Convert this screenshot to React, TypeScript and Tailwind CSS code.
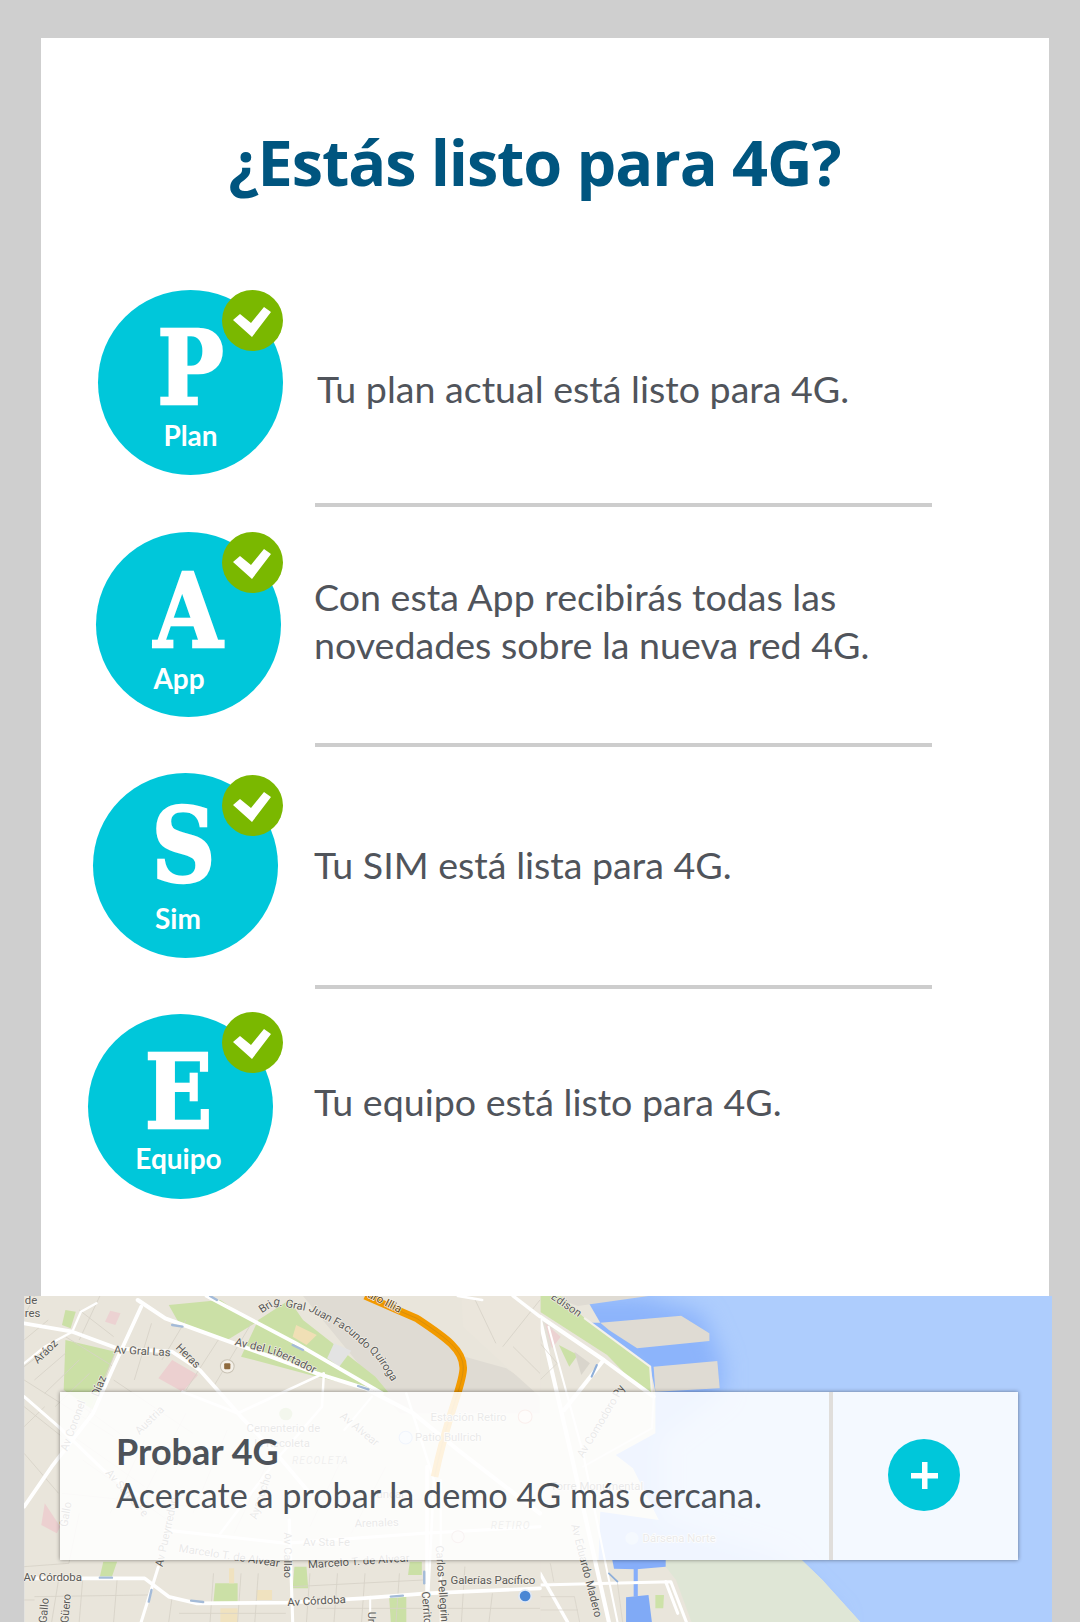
import React from "react";

const sans = "font-['Open_Sans','Noto_Sans',sans-serif]";
const body = "font-['Lato','Open_Sans',sans-serif]";

function Check() {
  return (
    <svg viewBox="0 0 61 61" className="absolute top-0 left-0 h-[61px] w-[61px]">
      <circle cx="30.5" cy="30.5" r="30.5" fill="#7ab800" />
      <polygon points="11,30 18,24 29,33 42,17 49,22 30,47" fill="#ffffff" />
    </svg>
  );
}

function Badge({ letter, label, left, top, letterClass, labelClass }: { letter: string; label: string; left: string; top: string; letterClass: string; labelClass: string }) {
  return (
    <div className="relative h-[185px] w-[185px] rounded-full bg-[#00c7da] text-white">
      <div className={`absolute inset-x-0 scale-x-[0.86] text-center font-['DejaVu_Serif',serif] text-[103px] leading-[104px] font-bold [-webkit-text-stroke:2.5px_#ffffff] ${letterClass}`}>{letter}</div>
      <div className={`absolute inset-x-0 text-center ${body} text-[28px] leading-[30px] font-bold ${labelClass}`}>{label}</div>
      <div className={`absolute h-[61px] w-[61px] ${left} ${top}`}>
        <Check />
      </div>
    </div>
  );
}

const Rule = () => <div className="ml-[274px] h-[4px] w-[617px] bg-[#cdcdcd]" />;

const Copy = ({ children, className }: { children: React.ReactNode; className: string }) => (
  <p className={`${body} text-[37.6px] leading-[48px] text-[#50545b] ${className}`}>{children}</p>
);

type L = [string, number, number, number?];

const leftLabels: L[] = [
  ["de", 72, 72, 0],
  ["res", 72, 110, 0],
  ["Aráoz", 110, 252, -45],
  ["Av Gral Las", 330, 220, 3],
  ["Heras", 508, 205, 45],
  ["Díaz", 285, 352, -68],
  ["Av Coronel", 195, 515, -70],
  ["Austria", 405, 465, -45],
  ["Cementerio de", 716, 455, 0],
  ["la Recoleta", 738, 500, 0],
  ["Av Alvear", 985, 412, 40],
  ["Estación Retiro", 1250, 422, 0],
  ["Patio Bullrich", 1205, 482, 0],
  ["Av Sta Fe", 880, 797, 0],
  ["Arenales", 1030, 742, -2],
  ["Marcelo T. de Alvear", 518, 815, 9],
  ["Marcelo T. de Alvear", 895, 865, -4],
  ["Av Córdoba", 68, 902, 0],
  ["Av Córdoba", 835, 978, -3],
  ["Av Callao", 825, 757, 90],
  ["Av Pueyrredón", 472, 862, -78],
  ["Ayacucho", 745, 720, -72],
  ["Gallo", 195, 742, -80],
  ["Gallo", 135, 1030, -85],
  ["Güero", 198, 1030, -85],
  ["Galerías Pacífico", 1308, 912, 0],
  ["Carlos Pellegrini", 1265, 797, 86],
  ["Cerrito", 1225, 935, 86],
  ["Uruguay", 1070, 995, 90],
  ["Av Santa Fe", 305, 580, 50],
  ["Juncal", 1075, 655, 0],
];

const rightLabels: L[] = [
  ["Edison", 30, 55, 35],
  ["Av Comodoro Py", 125, 535, -60],
  ["Torre Monumental", 30, 630, 0],
  ["Dársena Norte", 298, 787, 0],
  ["Av Eduardo Madero", 90, 735, 76],
];

function Labels({ items }: { items: L[] }) {
  return (
    <g fill="#5a5a58" fontSize="33" stroke="#f3efe7" strokeWidth="4" paintOrder="stroke" strokeLinejoin="round">
      {items.map(([t, x, y, r], i) => (
        <text key={i} x={x} y={y} transform={r ? `rotate(${r} ${x} ${y})` : undefined}>
          {t}
        </text>
      ))}
    </g>
  );
}

const thinLeft = [
  "M70 260L210 150", "M70 300L330 470", "M70 380L180 470", "M70 520L170 640", "M190 170L330 260", "M340 205L250 420", "M230 90L330 170",
  "M100 48L70 110", "M290 48L230 180", "M440 130L390 300", "M330 300L560 460", "M540 120L470 240", "M640 170L540 330", "M730 130L620 320",
  "M170 900L150 1026", "M240 900L230 1026", "M340 900L330 1026", "M500 950L490 1026", "M620 880L610 1026", "M700 880L690 1026", "M750 880L740 1026",
  "M100 950L430 945", "M520 1000L830 1000", "M900 880L890 1026", "M980 880L970 1026", "M1060 880L1050 1026", "M1160 880L1150 1026", "M850 920L1230 900",
  "M240 380L480 560", "M200 460L420 620", "M420 480L320 700", "M540 400L420 640", "M660 450L560 700", "M780 540L680 760", "M1000 520L900 740", "M1120 560L1020 760",
  "M180 640L560 680", "M1380 60L1440 190", "M1460 200L1568 60", "M1490 200L1568 280", "M1000 650L1230 660", "M240 540L500 730",
  "M70 180L140 120", "M70 440L130 380", "M100 300L190 220", "M130 340L230 240", "M160 380L260 280", "M70 860L200 850", "M200 850L230 700",
  "M1350 860L1340 1026", "M1430 940L1420 1026", "M1300 985H1568", "M70 960H100", "M920 985H1230",
];

function MapArt() {
  return (
    <svg viewBox="24 1296 1028 326" className="block h-[326px] w-[1028px] font-['Roboto',sans-serif]">
      <defs>
        <filter id="soft" x="-30%" y="-30%" width="160%" height="160%">
          <feGaussianBlur stdDeviation="32" />
        </filter>
      </defs>
      <rect x="24" y="1296" width="1028" height="326" fill="#aecdfd" />
      <g transform="translate(540 1280) scale(0.34435 0.33333)">
        <path d="M0 48H300L470 100L530 240L530 340L350 480L350 720L700 830L880 1026H0Z" fill="#8cb4fb" filter="url(#soft)" />
        <path d="M100 70L175 128L410 107L492 160L492 183L282 205L330 260L515 243L522 325L335 335L0 335V48Z" fill="#8db5fb" />
        <path d="M0 48H130L175 128H0Z" fill="#e9e5db" />
        <path d="M175 128L410 107L492 160L492 183L282 205L200 150Z" fill="#dfdbd3" />
        <path d="M330 260L515 243L522 325L335 335Z" fill="#dfdbd3" />
        <path d="M30 48H315L110 78Z" fill="#dfdbd3" />
        <path d="M0 48H60L130 115L320 260L335 335L335 460L220 525L270 565L345 720L175 695L170 840H760L820 900L930 1026H0Z" fill="#e9e5db" />
        <path d="M350 840H760L820 900L930 1026H440L395 900Z" fill="#dfe6d6" />
        <path d="M0 48H60L130 115L320 260L325 340L265 300L195 225L0 95Z" fill="#cde2a8" />
        <path d="M0 110L40 140L30 210L0 180Z" fill="#e3dfd6" />
        <path d="M15 130L60 170L35 205Z" fill="#ecd2d2" />
        <path d="M55 195L110 225L85 260Z" fill="#cbe0a6" />
        <path d="M100 215L145 250L120 285Z" fill="#d9d5cc" />
        <path d="M210 840H365V860L280 868L215 866Z" fill="#86aefa" />
        <path d="M272 860H284V950H272Z" fill="#86aefa" />
        <path d="M250 952L315 945L325 1026H250Z" fill="#80aaf6" />
        <path d="M335 945L360 945L358 985L335 985Z" fill="#cde2a8" />
        <g fill="none" stroke="#ffffff" strokeLinecap="round" strokeLinejoin="round">
          <path d="M0 110L185 240L330 350" strokeWidth="12" />
          <path d="M130 115L320 260L325 340" strokeWidth="6" stroke="#f4f1ea" />
          <path d="M330 350L325 445L125 560" strokeWidth="5" stroke="#f8f6f2" />
          <path d="M0 120L90 520L200 1026" strokeWidth="12" />
          <path d="M25 140L125 520L225 1026" strokeWidth="6" />
          <path d="M185 240L70 390" strokeWidth="12" />
          <path d="M0 915L380 905L425 1026" strokeWidth="9" />
          <path d="M365 905L400 1000" strokeWidth="9" />
          <path d="M80 1026L0 880" strokeWidth="10" />
        </g>
        <g fill="none" stroke="#d6d1c6" strokeWidth="2">
          <path d="M0 950H100L115 1026" />
          <path d="M0 990H110" />
          <path d="M30 850L40 905" />
          <path d="M0 190L50 250L0 300" />
          <path d="M225 910L240 1026" />
        </g>
        <path d="M165 255L150 290" stroke="#8eaed8" strokeWidth="6" strokeLinecap="round" />
        <path d="M200 880L225 905" stroke="#8eaed8" strokeWidth="5" strokeLinecap="round" />
        <circle cx="267" cy="775" r="19" fill="#b6cff5" />
        <Labels items={rightLabels} />
      </g>
      <g transform="translate(0 1280) scale(0.34435 0.33333)">
        <rect x="70" y="48" width="1500" height="978" fill="#e9e5db" />
        <path d="M880 48H1060L1210 120L1350 230L1470 265L1568 330V400H1160L1080 300Z" fill="#dfdbd3" />
        <path d="M1340 48H1568V350L1460 250L1345 140Z" fill="#ebe6dc" />
        <path d="M190 180L335 215L270 390L185 330Z" fill="#cbe0a6" />
        <path d="M490 75L640 60L740 130L660 180L520 130Z" fill="#cbe0a6" />
        <path d="M750 120L840 60L880 120L1090 290L1130 340L920 290L700 230Z" fill="#cbe0a6" />
        <path d="M860 135L920 165L890 195L850 170Z" fill="#f0dfb5" />
        <path d="M970 190L1020 212L985 260L950 235Z" fill="#e3e3e3" />
        <path d="M320 92L350 100L335 135L305 125Z" fill="#ecd2d2" />
        <path d="M500 240L575 285L530 335L460 295Z" fill="#ecd0d0" />
        <path d="M130 670L175 740L165 760L120 735Z" fill="#ecd0d0" />
        <path d="M190 90L220 95L205 145L180 135Z" fill="#cbe0a6" />
        <path d="M300 845H340L325 890H290Z" fill="#cbe0a6" />
        <path d="M855 860H890L895 925H850Z" fill="#cbe0a6" />
        <path d="M625 910H690V965H620Z" fill="#cbe0a6" />
        <path d="M745 930H790V960H745Z" fill="#f0e2bf" />
        <path d="M640 985H690V1026H640Z" fill="#f0e2bf" />
        <path d="M1130 950H1180V1026H1135Z" fill="#cbe0a6" />
        <path d="M1190 845H1225V885H1185Z" fill="#cbe0a6" />
        <path d="M665 865H680V910H665Z" fill="#f0e2bf" />
        <g fill="none" stroke="#d7d2c7" strokeWidth="2.5">
          {thinLeft.map((d, i) => (
            <path key={i} d={d} />
          ))}
        </g>
        <g fill="none" stroke="#ffffff" strokeLinecap="round" strokeLinejoin="round">
          <path d="M70 130L210 155L340 205L500 215L580 270L700 410L810 530L900 640" strokeWidth="11" />
          <path d="M400 60L480 115L680 190L920 280L1060 325L1200 400L1330 510L1568 700" strokeWidth="12" />
          <path d="M600 48L860 190L1110 340" strokeWidth="11" />
          <path d="M410 80L330 260L270 400L150 560L70 680" strokeWidth="11" />
          <path d="M70 350L170 440L300 570L420 660" strokeWidth="9" />
          <path d="M70 250L130 200L210 155L235 95L280 70" strokeWidth="7" />
          <path d="M530 335L690 400L940 280" strokeWidth="8" />
          <path d="M940 290L935 380L810 530L640 760" strokeWidth="7" />
          <path d="M70 895L420 895L490 950L570 970L835 968L1050 955L1240 940L1568 925" strokeWidth="11" />
          <path d="M460 860L410 1026" strokeWidth="9" />
          <path d="M1240 560L1240 1026" strokeWidth="10" />
          <path d="M1280 600L1280 1026" strokeWidth="6" />
          <path d="M480 750L830 790L1230 760L1568 740" strokeWidth="9" />
          <path d="M840 720L850 1026" strokeWidth="9" />
          <path d="M1075 950V1026" strokeWidth="6" />
          <path d="M1180 340L1260 600L1240 1026" strokeWidth="7" />
          <path d="M1490 48L1568 110" strokeWidth="10" />
          <path d="M1330 48L1400 60" strokeWidth="8" />
          <path d="M1000 450L1080 350" strokeWidth="6" />
        </g>
        <path d="M1060 48L1210 115C1290 170 1350 210 1345 270C1340 330 1300 400 1262 590" fill="none" stroke="#f29a00" strokeWidth="22" strokeLinejoin="round" />
        <path d="M1060 48L1210 115C1290 170 1350 210 1345 270C1340 330 1300 400 1262 590" fill="none" stroke="#c98a14" strokeWidth="2" />
        <g stroke="#a4bbd8" strokeWidth="7" strokeLinecap="round">
          <path d="M500 135L530 140" />
          <path d="M850 195L880 210" />
          <path d="M1040 318L1070 328" />
          <path d="M290 893H325" />
          <path d="M555 962L590 966" />
          <path d="M1135 950L1170 947" />
          <path d="M1232 875V910" />
          <path d="M440 930L432 965" />
          <path d="M610 48L630 60" />
        </g>
        <circle cx="660" cy="259" r="20" fill="#f4f0e8" stroke="#c9c3b5" strokeWidth="3" />
        <rect x="651" y="250" width="18" height="18" rx="3" fill="#8f6b3e" />
        <circle cx="830" cy="402" r="19" fill="#a6c57a" />
        <circle cx="1525" cy="410" r="20" fill="#f2e6dc" stroke="#d88a7a" strokeWidth="3" />
        <circle cx="1178" cy="473" r="19" fill="#dbe6f7" stroke="#8fb0e8" strokeWidth="3" />
        <circle cx="1330" cy="770" r="18" fill="#efe6e0" stroke="#c9a0a0" strokeWidth="3" />
        <circle cx="1525" cy="948" r="18" fill="#4a86d4" stroke="#dfe8f5" strokeWidth="5" />
        <path id="q1" d="M760 100L800 75L900 95L1000 150L1090 230L1160 340" fill="none" />
        <path id="q2" d="M680 195L800 225L925 287" fill="none" />
        <path id="q3" d="M1065 50L1210 125" fill="none" />
        <g fill="#5a5a58" fontSize="33" stroke="#f3efe7" strokeWidth="4" paintOrder="stroke" strokeLinejoin="round">
          <text><textPath href="#q1">Brig. Gral Juan Facundo Quiroga</textPath></text>
          <text><textPath href="#q2">Av del Libertador</textPath></text>
          <text fill="#6a4a10"><textPath href="#q3">uro Illia</textPath></text>
        </g>
        <g fill="#8b8b84" fontSize="30" fontStyle="italic" letterSpacing="3">
          <text x="848" y="552">RECOLETA</text>
          <text x="1425" y="746">RETIRO</text>
        </g>
        <Labels items={leftLabels} />
      </g>
    </svg>
  );
}

export default function App() {
  return (
    <div className="relative h-[1622px] w-[1080px] overflow-hidden bg-[#cfcfcf] pt-[38px]">
      <main className="ml-[41px] h-[1258px] w-[1008px] bg-white">
        <h1 className={`${sans} pt-[88px] pr-[21px] text-center text-[63px] leading-[72px] font-bold tracking-[-1.1px] text-[#00557f]`}>¿Estás listo para 4G?</h1>
        <div className="mt-[92px]">
          <div className="flex h-[213px] items-start">
            <div className="w-[276px] shrink-0 pl-[57px]">
              <Badge letter="P" label="Plan" left="left-[124px]" top="top-0" letterClass="top-[26px]" labelClass="top-[130px]" />
            </div>
            <Copy className="mt-[75px]">Tu plan actual está listo para 4G.</Copy>
          </div>
          <Rule />
          <div className="flex h-[236px] items-start pt-[25px]">
            <div className="w-[273px] shrink-0 pl-[55px]">
              <Badge letter="A" label="App" left="left-[126px]" top="top-0" letterClass="top-[27px] left-[-1px]" labelClass="top-[131px] left-[-19px]" />
            </div>
            <Copy className="mt-[41px]">Con esta App recibirás todas las<br />novedades sobre la nueva red 4G.</Copy>
          </div>
          <Rule />
          <div className="flex h-[238px] items-start pt-[26px]">
            <div className="w-[273px] shrink-0 pl-[52px]">
              <Badge letter="S" label="Sim" left="left-[129px]" top="top-[2px]" letterClass="top-[21px] left-[-4px]" labelClass="top-[130px] left-[-15px]" />
            </div>
            <Copy className="mt-[68px]">Tu SIM está lista para 4G.</Copy>
          </div>
          <Rule />
          <div className="flex items-start pt-[25px]">
            <div className="w-[273px] shrink-0 pl-[47px]">
              <Badge letter="E" label="Equipo" left="left-[134px]" top="top-[-2px]" letterClass="top-[26px] left-[-4px]" labelClass="top-[129px] left-[-4px]" />
            </div>
            <Copy className="mt-[64px]">Tu equipo está listo para 4G.</Copy>
          </div>
        </div>
      </main>
      <section className="relative ml-[24px] h-[326px] w-[1028px]">
        <MapArt />
        <div className="absolute top-[96px] left-[36px] flex h-[168px] w-[958px] bg-white/[0.865] shadow-[0_0_4px_rgba(0,0,0,0.45)]">
          <div className={`${body} w-[769px] pt-[37px] pl-[56px] text-[#4d5259]`}>
            <p className="text-[36px] leading-[44px] font-bold">Probar 4G</p>
            <p className="text-[34.2px] leading-[44px]">Acercate a probar la demo 4G más cercana.</p>
          </div>
          <div className="w-[4px] bg-[#e0dedb]" />
          <div className="flex flex-1 items-center justify-center pr-[3px] pb-[2px]">
            <div className="flex h-[72px] w-[72px] items-center justify-center rounded-full bg-[#00c7da]">
              <svg viewBox="0 0 27 27" className="h-[27px] w-[27px]">
                <path d="M11 0h5.5v11H27v5.5H16.5V27H11V16.5H0V11h11z" fill="#ffffff" />
              </svg>
            </div>
          </div>
        </div>
      </section>
    </div>
  );
}
